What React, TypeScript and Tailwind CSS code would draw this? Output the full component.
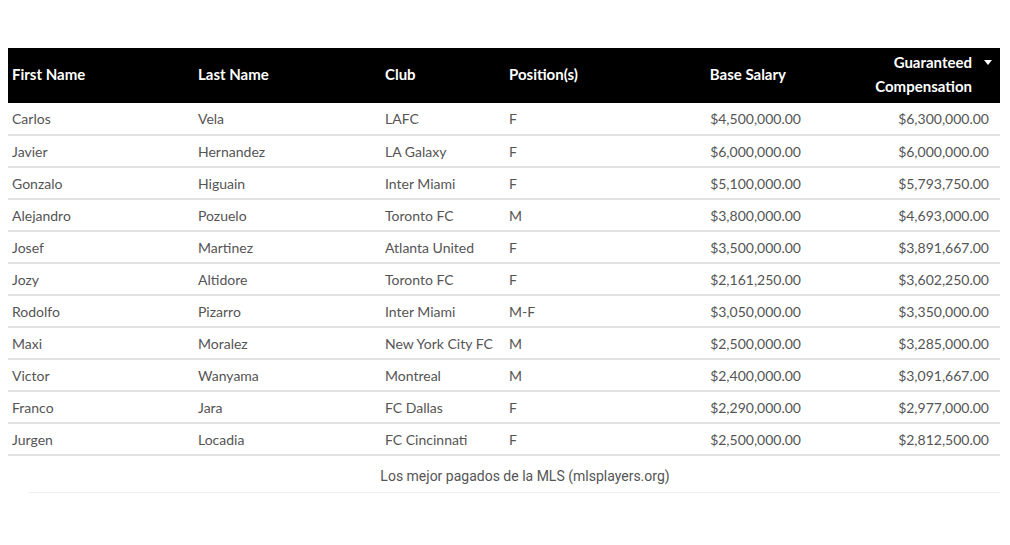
import React from "react";

type Player = {
  first: string;
  last: string;
  club: string;
  pos: string;
  base: string;
  guaranteed: string;
};

const players: Player[] = [
  { first: "Carlos", last: "Vela", club: "LAFC", pos: "F", base: "$4,500,000.00", guaranteed: "$6,300,000.00" },
  { first: "Javier", last: "Hernandez", club: "LA Galaxy", pos: "F", base: "$6,000,000.00", guaranteed: "$6,000,000.00" },
  { first: "Gonzalo", last: "Higuain", club: "Inter Miami", pos: "F", base: "$5,100,000.00", guaranteed: "$5,793,750.00" },
  { first: "Alejandro", last: "Pozuelo", club: "Toronto FC", pos: "M", base: "$3,800,000.00", guaranteed: "$4,693,000.00" },
  { first: "Josef", last: "Martinez", club: "Atlanta United", pos: "F", base: "$3,500,000.00", guaranteed: "$3,891,667.00" },
  { first: "Jozy", last: "Altidore", club: "Toronto FC", pos: "F", base: "$2,161,250.00", guaranteed: "$3,602,250.00" },
  { first: "Rodolfo", last: "Pizarro", club: "Inter Miami", pos: "M-F", base: "$3,050,000.00", guaranteed: "$3,350,000.00" },
  { first: "Maxi", last: "Moralez", club: "New York City FC", pos: "M", base: "$2,500,000.00", guaranteed: "$3,285,000.00" },
  { first: "Victor", last: "Wanyama", club: "Montreal", pos: "M", base: "$2,400,000.00", guaranteed: "$3,091,667.00" },
  { first: "Franco", last: "Jara", club: "FC Dallas", pos: "F", base: "$2,290,000.00", guaranteed: "$2,977,000.00" },
  { first: "Jurgen", last: "Locadia", club: "FC Cincinnati", pos: "F", base: "$2,500,000.00", guaranteed: "$2,812,500.00" },
];

export default function App() {
  return (
    <div className="w-[1010px] h-[545px] bg-white pt-[48px] px-[8px] pr-[10px] font-['Lato',sans-serif]">
      <table className="w-[992px] table-fixed border-collapse">
        <colgroup>
          <col className="w-[186px]" />
          <col className="w-[187px]" />
          <col className="w-[124px]" />
          <col className="w-[135px]" />
          <col className="w-[172px]" />
          <col className="w-[188px]" />
        </colgroup>
        <thead>
          <tr className="bg-black text-white text-[15px] font-bold h-[55px]">
            <th className="text-left pl-[4px] pb-[3px] font-bold">First Name</th>
            <th className="text-left pl-[4px] pb-[3px] font-bold">Last Name</th>
            <th className="text-left pl-[4px] pb-[3px] font-bold">Club</th>
            <th className="text-left pl-[4px] pb-[3px] font-bold">Position(s)</th>
            <th className="text-right pr-[26px] pb-[3px] font-bold">Base Salary</th>
            <th className="relative text-right pr-[28px] pb-[4px] font-bold leading-[24px]">
              Guaranteed
              <br />
              Compensation
              <span className="absolute right-[8px] top-[12px] w-0 h-0 border-l-[4px] border-r-[4px] border-t-[5px] border-l-transparent border-r-transparent border-t-white" />
            </th>
          </tr>
        </thead>
        <tbody>
          {players.map((p) => (
            <tr
              key={p.first + p.last}
              className="h-[32px] border-b-2 border-[#e2e2e2] text-[14px] text-[#555]"
            >
              <td className="pl-[4px]">{p.first}</td>
              <td className="pl-[4px]">{p.last}</td>
              <td className="pl-[4px] whitespace-nowrap">{p.club}</td>
              <td className="pl-[4px]">{p.pos}</td>
              <td className="text-right pr-[11px]">{p.base}</td>
              <td className="text-right pr-[11px]">{p.guaranteed}</td>
            </tr>
          ))}
        </tbody>
      </table>
      <div className="ml-[20px] w-[972px] border-b border-[#eee] pt-[10px] pb-[5px] pl-[22px] text-center text-[14px] text-[#555] font-['Roboto',sans-serif]">
        Los mejor pagados de la MLS (mlsplayers.org)
      </div>
    </div>
  );
}
